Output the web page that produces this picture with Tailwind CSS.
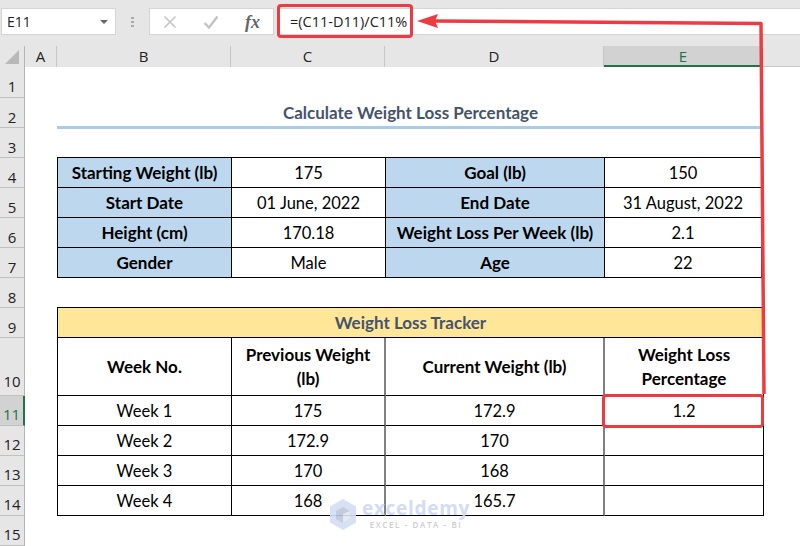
<!DOCTYPE html>
<html lang="en">
<head>
    <meta charset="UTF-8">
    <title>Calculate Weight Loss Percentage</title>
    <script src="https://cdn.jsdelivr.net/npm/@tailwindcss/browser@4"></script>
</head>
<body class="bg-white">
<div class="relative w-[800px] h-[546px] overflow-hidden bg-white font-['Lato','Liberation_Sans',sans-serif] text-[16.5px] text-black">

    <!-- formula bar -->
    <div class="h-[46px] bg-[#e6e6e6] pt-2 flex items-start font-['Open_Sans',sans-serif]">
        <div class="ml-px w-[115px] h-[27px] bg-white border border-[#d4d4d4] flex items-center justify-between pl-[5px] pr-[7px] text-[14px] text-[#222]">
            <span>E11</span>
            <span class="w-0 h-0 border-x-[4px] border-x-transparent border-t-[4px] border-t-[#666]"></span>
        </div>
        <div class="w-[33px] h-[27px] flex flex-col items-center justify-center gap-[2px]">
            <span class="w-[3px] h-[2px] bg-[#aaa]"></span>
            <span class="w-[3px] h-[2px] bg-[#aaa]"></span>
            <span class="w-[3px] h-[2px] bg-[#aaa]"></span>
        </div>
        <div class="w-[125px] h-[27px] bg-white border border-[#d4d4d4] flex items-center justify-between pl-[13px] pr-[13px]">
            <svg width="14" height="14" viewBox="0 0 14 14" fill="none" stroke="#c4c4c4" stroke-width="1.6"><path d="M1.5 1.5l11 11M12.5 1.5l-11 11"/></svg>
            <svg width="16" height="14" viewBox="0 0 16 14" fill="none" stroke="#c4c4c4" stroke-width="2.4"><path d="M1.5 8l4.5 4.5L14.5 1.5"/></svg>
            <span class="font-['Liberation_Serif',serif] italic font-bold text-[18px] text-[#666] leading-none">fx</span>
        </div>
        <div class="ml-1 flex-1 h-[27px] bg-white border-y border-[#d4d4d4] flex items-center pl-[12px] text-[14.5px] text-[#222]">=(C11-D11)/C11%</div>
    </div>

    <!-- column headers -->
    <div class="flex h-[21px] bg-[#e6e6e6] font-['Open_Sans',sans-serif] text-[15px] text-[#222]">
        <div class="w-[25px] border-r border-[#b5b5b5] flex items-center justify-center">
            <svg width="16" height="16" viewBox="0 0 16 16"><path d="M15 1v14H1z" fill="#b8b8b8"/></svg>
        </div>
        <div class="w-[32px] border-r border-[#c6c6c6] text-center leading-[21px]">A</div>
        <div class="w-[174px] border-r border-[#c6c6c6] text-center leading-[21px]">B</div>
        <div class="w-[154px] border-r border-[#c6c6c6] text-center leading-[21px]">C</div>
        <div class="w-[219px] border-r border-[#c6c6c6] text-center leading-[21px]">D</div>
        <div class="w-[158px] bg-[#d2d2d2] border-b-2 border-[#217346] text-center leading-[21px] text-[#217346]">E</div>
        <div class="flex-1 border-b border-[#c6c6c6]"></div>
    </div>

    <div class="flex">
        <!-- row numbers -->
        <div class="w-[25px] h-[479px] bg-[#e6e6e6] border-r border-[#b5b5b5] font-['Open_Sans',sans-serif] text-[15px] text-[#222] text-center">
            <div class="h-[31px] leading-[39px] border-b border-[#c0c0c0]">1</div>
            <div class="h-[30px] leading-[38px] border-b border-[#c0c0c0]">2</div>
            <div class="h-[30px] leading-[38px] border-b border-[#c0c0c0]">3</div>
            <div class="h-[30px] leading-[38px] border-b border-[#c0c0c0]">4</div>
            <div class="h-[30px] leading-[38px] border-b border-[#c0c0c0]">5</div>
            <div class="h-[30px] leading-[38px] border-b border-[#c0c0c0]">6</div>
            <div class="h-[30px] leading-[38px] border-b border-[#c0c0c0]">7</div>
            <div class="h-[30px] leading-[38px] border-b border-[#c0c0c0]">8</div>
            <div class="h-[30px] leading-[38px] border-b border-[#c0c0c0]">9</div>
            <div class="h-[58px] border-b border-[#c0c0c0] flex items-end justify-center leading-[28px]">10</div>
            <div class="h-[30px] leading-[36px] bg-[#d2d2d2] text-[#217346] border-b border-[#c0c0c0] border-r-2 border-r-[#217346] -mr-px">11</div>
            <div class="h-[30px] leading-[36px] border-b border-[#c0c0c0]">12</div>
            <div class="h-[30px] leading-[36px] border-b border-[#c0c0c0]">13</div>
            <div class="h-[30px] leading-[36px] border-b border-[#c0c0c0]">14</div>
            <div class="h-[30px] leading-[36px] border-b border-[#c0c0c0]">15</div>
        </div>

        <!-- sheet -->
        <div class="flex-1 pl-[32px] pt-[30px]">
            <div class="w-[704px] h-[32px] pl-[3px] border-b-[3px] border-[#a9cbec] text-center font-bold text-[17px] text-[#44546a] leading-[32px]">Calculate Weight Loss Percentage</div>

            <!-- summary table -->
            <div class="mt-[28px] w-[705px] grid grid-cols-[174px_154px_219px_157px] grid-rows-[repeat(4,30px)] border-t border-l border-black text-center leading-[31px]">
                <div class="bg-[#bdd7ee] font-bold text-[17px] leading-[29px] border-r border-b border-black">Starting Weight (lb)</div>
                <div class="border-r border-b border-black">175</div>
                <div class="bg-[#bdd7ee] font-bold text-[17px] leading-[29px] border-r border-b border-black">Goal (lb)</div>
                <div class="border-r border-b border-black">150</div>
                <div class="bg-[#bdd7ee] font-bold text-[17px] leading-[29px] border-r border-b border-black">Start Date</div>
                <div class="border-r border-b border-black">01 June, 2022</div>
                <div class="bg-[#bdd7ee] font-bold text-[17px] leading-[29px] border-r border-b border-black">End Date</div>
                <div class="border-r border-b border-black">31 August, 2022</div>
                <div class="bg-[#bdd7ee] font-bold text-[17px] leading-[29px] border-r border-b border-black">Height (cm)</div>
                <div class="border-r border-b border-black">170.18</div>
                <div class="bg-[#bdd7ee] font-bold text-[17px] leading-[29px] border-r border-b border-black">Weight Loss Per Week (lb)</div>
                <div class="border-r border-b border-black">2.1</div>
                <div class="bg-[#bdd7ee] font-bold text-[17px] leading-[29px] border-r border-b border-black">Gender</div>
                <div class="border-r border-b border-black">Male</div>
                <div class="bg-[#bdd7ee] font-bold text-[17px] leading-[29px] border-r border-b border-black">Age</div>
                <div class="border-r border-b border-black">22</div>
            </div>

            <!-- tracker table -->
            <div class="mt-[29px] w-[707px] grid grid-cols-[174px_154px_219px_159px] grid-rows-[30px_58px_30px_30px_30px_30px] border-t border-l border-black text-center leading-[31px]">
                <div class="col-span-4 bg-[#ffe699] font-bold text-[17px] leading-[29px] text-[#44546a] border-r border-b border-black">Weight Loss Tracker</div>
                <div class="font-bold text-[17px] border-r border-b border-black flex items-center justify-center">Week No.</div>
                <div class="font-bold text-[17px] pt-px border-r-2 border-r-[#808080] border-b border-black flex items-center justify-center leading-[24px]">Previous Weight<br>(lb)</div>
                <div class="font-bold text-[17px] border-r-2 border-r-[#808080] border-b border-black flex items-center justify-center">Current Weight (lb)</div>
                <div class="font-bold text-[17px] pt-px border-r border-b border-black flex items-center justify-center leading-[24px]">Weight Loss<br>Percentage</div>
                <div class="border-r border-b border-black">Week 1</div>
                <div class="border-r-2 border-r-[#808080] border-b border-black">175</div>
                <div class="border-r-2 border-r-[#808080] border-b border-black">172.9</div>
                <div class="border-r border-b border-black">1.2</div>
                <div class="border-r border-b border-black">Week 2</div>
                <div class="border-r-2 border-r-[#808080] border-b border-black">172.9</div>
                <div class="border-r-2 border-r-[#808080] border-b border-black">170</div>
                <div class="border-r border-b border-black"></div>
                <div class="border-r border-b border-black">Week 3</div>
                <div class="border-r-2 border-r-[#808080] border-b border-black">170</div>
                <div class="border-r-2 border-r-[#808080] border-b border-black">168</div>
                <div class="border-r border-b border-black"></div>
                <div class="border-r border-b border-black">Week 4</div>
                <div class="border-r-2 border-r-[#808080] border-b border-black">168</div>
                <div class="border-r-2 border-r-[#808080] border-b border-black">165.7</div>
                <div class="border-r border-b border-black"></div>
            </div>
        </div>
    </div>

    <!-- red annotations -->
    <div class="absolute left-[277px] top-[4px] w-[136px] h-[34px] border-[3px] border-[#ee3b42] rounded-[4px]"></div>
    <div class="absolute left-[602px] top-[394px] w-[162px] h-[34px] border-[3px] border-[#ee3b42] rounded-[4px]"></div>
    <svg class="absolute left-0 top-0" width="800" height="546" viewBox="0 0 800 546" fill="none">
        <path d="M435 21L761 23.5L764 394" stroke="#ee3b42" stroke-width="3.5" stroke-linejoin="round"/>
        <path d="M417 21L438 14L435 21L438 28z" fill="#ee3b42"/>
    </svg>

    <!-- watermark -->
    <div class="absolute left-[329px] top-[498px] flex items-start gap-[5px] opacity-90">
        <svg width="28" height="33" viewBox="0 0 28 33">
            <path d="M14 1L27 8.5V24.5L14 32L1 24.5V8.5z" fill="#d3ddf5"/>
            <path d="M14 9L21 13V21L14 25L7 21V13z" fill="#bcc7dc"/>
            <path d="M14 16L21 13V21L14 25z" fill="#e2e7f0"/>
        </svg>
        <div class="flex flex-col items-center">
            <span class="font-['Open_Sans',sans-serif] font-bold text-[19px] leading-[21px] tracking-[0.7px] text-[#cdd9f4]">exceldemy</span>
            <span class="mt-[1px] font-['Open_Sans',sans-serif] font-semibold text-[8px] leading-[10px] tracking-[1.6px] text-[#c8c8c8]">EXCEL - DATA - BI</span>
        </div>
    </div>
</div>
</body>
</html>
